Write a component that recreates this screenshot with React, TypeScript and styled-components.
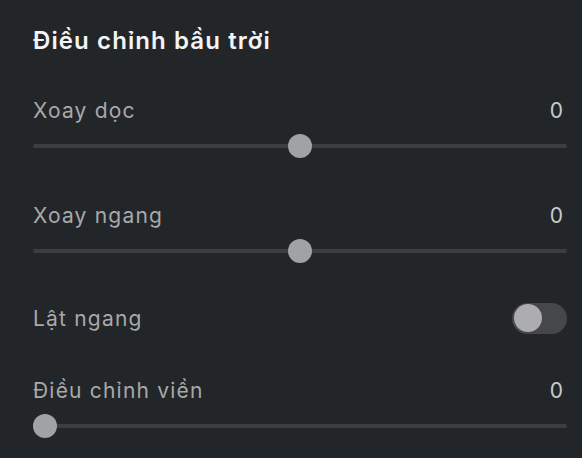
import React, { useState } from "react";
import styled, { createGlobalStyle } from "styled-components";

const Global = createGlobalStyle`
  html, body { margin: 0; padding: 0; background: #222629; }
  body { font-family: Inter, "Noto Sans", sans-serif; }
`;

const Panel = styled.div`
  width: 582px;
  height: 458px;
  box-sizing: border-box;
  padding: 26px 15px 0 33px;
  background: #222629;
  display: flex;
  flex-direction: column;
  overflow: hidden;
`;

const Title = styled.h2`
  margin: 0 0 39.5px;
  font-size: 24px;
  line-height: 30px;
  font-weight: 600;
  letter-spacing: 1.1px;
  color: #f4f4f5;
`;

const SliderRow = styled.div<{ $mt: number }>`
  display: flex;
  flex-direction: column;
  margin-top: ${(p) => p.$mt}px;
`;

const Header = styled.div`
  display: flex;
  justify-content: space-between;
  align-items: center;
  height: 30px;
  font-size: 21px;
  line-height: 30px;
  letter-spacing: 1.2px;
`;

const Label = styled.span`
  color: #a8a9ab;
`;

const Value = styled.span`
  color: #c9cacc;
  padding-right: 4px;
  letter-spacing: 0;
`;

const SliderArea = styled.div`
  position: relative;
  height: 40px;
`;

const Track = styled.div`
  position: absolute;
  left: 0;
  right: 0;
  top: 18px;
  height: 4px;
  border-radius: 2px;
  background: #3b3d41;
`;

const Thumb = styled.div`
  position: absolute;
  top: 8px;
  width: 24px;
  height: 24px;
  border-radius: 50%;
  background: #a1a2a5;
`;

const ToggleRow = styled.div<{ $mt: number }>`
  display: flex;
  justify-content: space-between;
  align-items: center;
  height: 40px;
  margin-top: ${(p) => p.$mt}px;
  font-size: 21px;
  letter-spacing: 1.2px;
`;

const Switch = styled.button<{ $on: boolean }>`
  position: relative;
  width: 55px;
  height: 31px;
  border: none;
  padding: 0;
  border-radius: 16px;
  background: ${(p) => (p.$on ? "#6b6c70" : "#46474b")};
  cursor: pointer;
`;

const Knob = styled.span<{ $on: boolean }>`
  position: absolute;
  top: 1.5px;
  left: ${(p) => (p.$on ? "25.5px" : "1.5px")};
  width: 28px;
  height: 28px;
  border-radius: 50%;
  background: #adadb0;
`;

type SliderProps = { label: string; value: number; min: number; max: number; mt: number };

function Slider({ label, value, min, max, mt }: SliderProps) {
  const pct = (value - min) / (max - min);
  return (
    <SliderRow $mt={mt}>
      <Header>
        <Label>{label}</Label>
        <Value>{value}</Value>
      </Header>
      <SliderArea>
        <Track />
        <Thumb style={{ left: `calc(${pct} * (100% - 24px))` }} />
      </SliderArea>
    </SliderRow>
  );
}

export default function App() {
  const [flip, setFlip] = useState(false);
  return (
    <>
      <Global />
      <Panel>
        <Title>Điều chỉnh bầu trời</Title>
        <Slider label="Xoay dọc" value={0} min={-180} max={180} mt={0} />
        <Slider label="Xoay ngang" value={0} min={-180} max={180} mt={35} />
        <ToggleRow $mt={27.5}>
          <Label>Lật ngang</Label>
          <Switch $on={flip} onClick={() => setFlip(!flip)}>
            <Knob $on={flip} />
          </Switch>
        </ToggleRow>
        <Slider label="Điều chỉnh viền" value={0} min={0} max={100} mt={38} />
      </Panel>
    </>
  );
}
